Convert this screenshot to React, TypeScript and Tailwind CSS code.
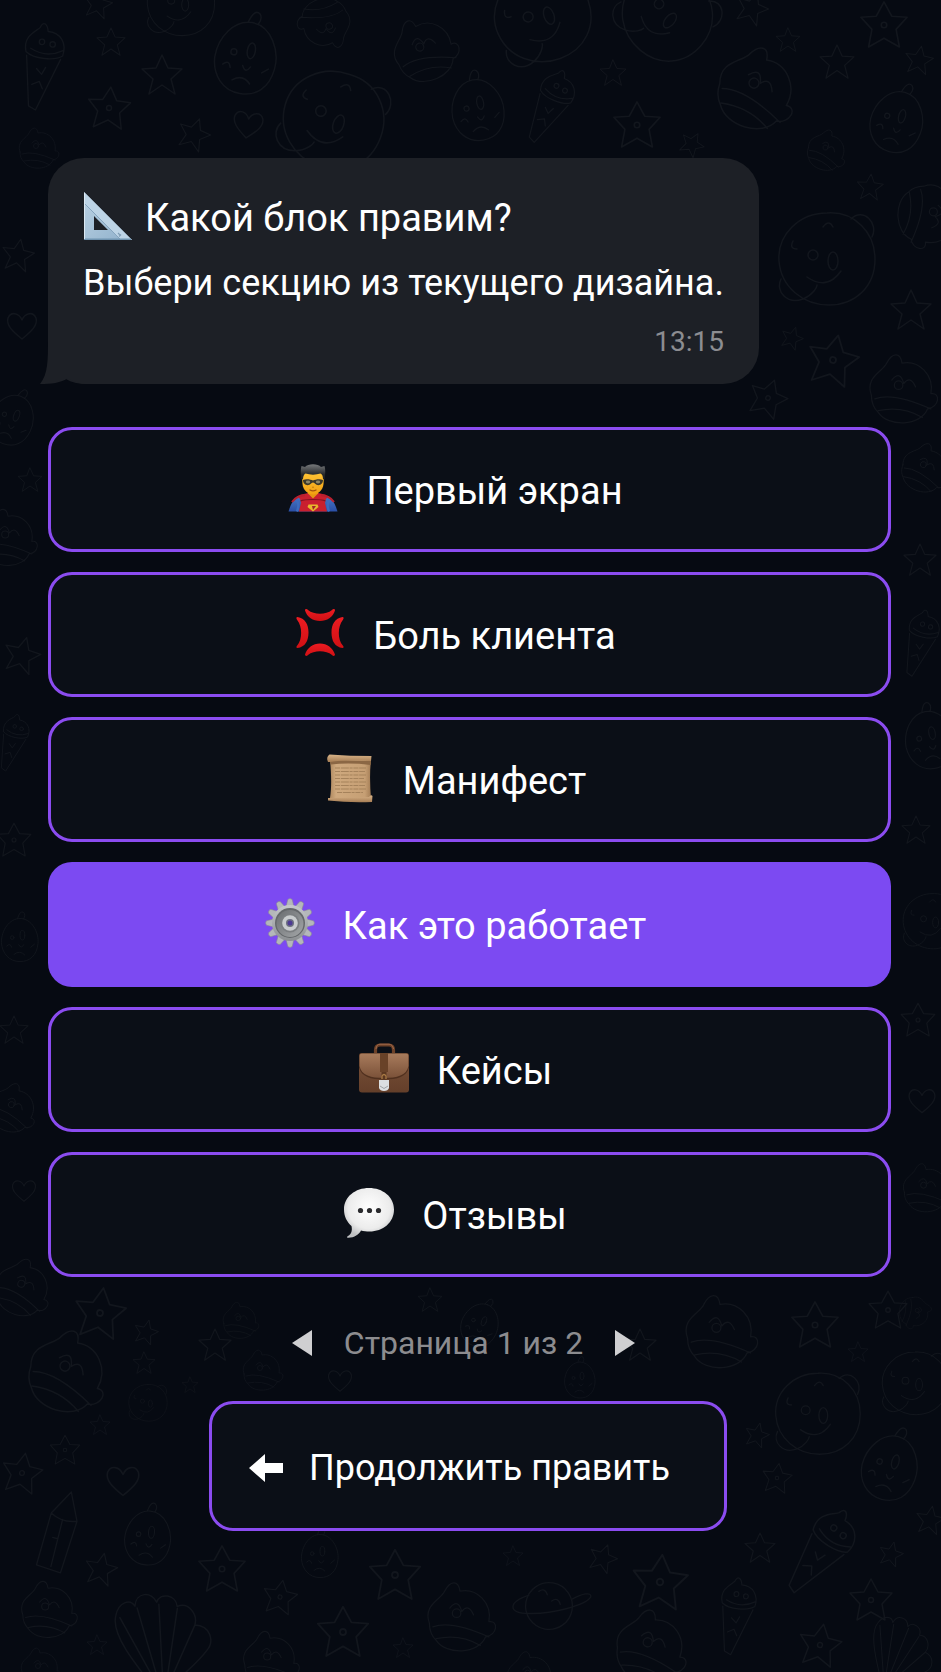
import React from 'react';

type IconProps = { className?: string };

const SetSquareIcon = ({ className }: IconProps) => (
  <svg viewBox="0 0 50 50" className={className} aria-hidden="true">
    <defs>
      <linearGradient id="sq" x1="0" y1="0" x2="1" y2="1">
        <stop offset="0" stopColor="#bcd3e4" />
        <stop offset="1" stopColor="#8fb0cb" />
      </linearGradient>
    </defs>
    <path fillRule="evenodd" d="M1 1 L49 49 H1 Z M11 25 V39 H25 Z" fill="url(#sq)" />
    <path d="M1 1 L49 49 H38 L1 12 Z" fill="#bdd4e6" />
    <path d="M1 12 L38 49" stroke="#86a5bf" strokeWidth="1" />
    <path d="M1 48.300 H48" stroke="#6f93b0" strokeWidth="1.400" />
    <path d="M1.500 2 V48" stroke="#dbe9f3" strokeWidth="1" />
    <path d="M35 42 l2 2 M36 45.500 l2 -2" stroke="#7f9db5" strokeWidth="1.200" />
  </svg>
);

const HeroIcon = ({ className }: IconProps) => (
  <svg viewBox="0 0 50 50" className={className} aria-hidden="true">
    <defs>
      <linearGradient id="cape" x1="0" y1="0" x2="0" y2="1">
        <stop offset="0" stopColor="#4f7fc9" />
        <stop offset="1" stopColor="#2a4fa6" />
      </linearGradient>
      <linearGradient id="hair" x1="0" y1="0" x2="0" y2="1">
        <stop offset="0" stopColor="#77797b" />
        <stop offset=".7" stopColor="#232528" />
      </linearGradient>
      <linearGradient id="skin" x1="0" y1="0" x2="0" y2="1">
        <stop offset="0" stopColor="#ffc83a" />
        <stop offset="1" stopColor="#f2a012" />
      </linearGradient>
    </defs>
    <path d="M0.500 48.500 C3 41 5 35.500 12 33 L20 30.500 H30 L38 33 C45 35.500 47 41 49.500 48.500 Z" fill="url(#cape)" />
    <path d="M10 33 C14 30.500 18 31 20 30 L25 35 L30 30 C33 31 36 30.500 40 33 L37.500 37 L37 40 L39 48.500 H11 L13 40 L12.500 37 Z" fill="#c9202f" />
    <path d="M4 39 C8 33.500 12 33 17 32 M46 39 C42 33.500 38 33 33 32" stroke="#b8202f" strokeWidth="2" fill="none" />
    <path d="M8 37 C11 39 11 43 9 48.500 M42 37 C39 39 39 43 41 48.500" stroke="#3c6cc0" strokeWidth="2.400" fill="none" />
    <path d="M12.500 38 C17 36 33 36 37.500 38" stroke="#7d1320" strokeWidth="1.200" fill="none" />
    <path d="M20.500 41.500 H29.500 L30.500 44 L25 48.500 L19.500 44 Z" fill="#e8b92d" />
    <path d="M24 43 h4 l-3 4 z" fill="#a3202a" />
    <path d="M20 26 H30 V30.500 L25 35.500 L20 30.500 Z" fill="#e8960f" />
    <path d="M14 12 C14 5 36 5 36 12 L35.500 21 C35 27 30 31.500 25 31.500 C20 31.500 15 27 14.500 21 Z" fill="url(#skin)" />
    <path d="M13.500 16.500 C12.500 11 12.500 6 13.500 3 L17 4 C20 .3 30 .3 33 4 L36.500 3 C37.500 6 37.500 11 36.500 16.500 L35 16 C35 13 34 11 32.500 10.500 C28 12 22 12 17.500 10.500 C16 11.500 15.200 13 15 16 Z" fill="url(#hair)" />
    <path d="M15 17 C18 15.500 23 16.500 25 17.500 C27 16.500 32 15.500 35 17 C35 21.500 31 23 28.500 21.700 C27 21 26 19.500 25 19.500 C24 19.500 23 21 21.500 21.700 C19 23 15 21.500 15 17 Z" fill="#3b382c" />
    <ellipse cx="20" cy="19" rx="2.200" ry="1.400" fill="#8d8668" />
    <ellipse cx="30" cy="19" rx="2.200" ry="1.400" fill="#8d8668" />
    <path d="M22 27 Q25 28.700 28 27" stroke="#a1540d" strokeWidth="1.300" fill="none" strokeLinecap="round" />
    <path d="M24 24 Q25 24.800 26 24" stroke="#c57a0a" strokeWidth="1" fill="none" />
  </svg>
);

const AngerIcon = ({ className }: IconProps) => (
  <svg viewBox="0 0 50 50" className={className} aria-hidden="true">
    <defs>
      <linearGradient id="ang" x1="0" y1="0" x2="0" y2="1">
        <stop offset="0" stopColor="#ec1c22" />
        <stop offset="1" stopColor="#d11014" />
      </linearGradient>
    </defs>
    <g fill="url(#ang)">
      <path d="M10 2.500 C10 .7 12 .8 13 2 C19 7 31 7 37 2 C38 .8 40 .7 40 2.500 C38 9 32 13 25 13 C18 13 12 9 10 2.500 Z" />
      <path d="M10 46.500 C10 48.300 12 48.200 13 47 C19 42 31 42 37 47 C38 48.200 40 48.300 40 46.500 C38 40 32 35.500 25 35.500 C18 35.500 12 40 10 46.500 Z" />
      <path d="M2.500 9 C10 10.500 13.500 16 13.500 24.500 C13.500 33 10 39 2.500 40 C1 40 1.200 38.500 2.200 37.500 C7.500 31.500 7.500 18.500 2.200 12 C1.200 10.500 1 9 2.500 9 Z" />
      <path d="M47.500 9 C40 10.500 36.500 16 36.500 24.500 C36.500 33 40 39 47.500 40 C49 40 48.800 38.500 47.800 37.500 C42.500 31.500 42.500 18.500 47.800 12 C48.800 10.500 49 9 47.500 9 Z" />
    </g>
  </svg>
);

const ScrollIcon = ({ className }: IconProps) => (
  <svg viewBox="0 0 50 50" className={className} aria-hidden="true">
    <defs>
      <linearGradient id="pap" x1="0" y1="0" x2="1" y2="0">
        <stop offset="0" stopColor="#b08a61" />
        <stop offset=".15" stopColor="#cfa97e" />
        <stop offset=".85" stopColor="#c69f74" />
        <stop offset="1" stopColor="#a47d55" />
      </linearGradient>
      <linearGradient id="roll" x1="0" y1="0" x2="0" y2="1">
        <stop offset="0" stopColor="#d9b489" />
        <stop offset="1" stopColor="#a67d54" />
      </linearGradient>
    </defs>
    <path d="M5 6 L46 7 C44.500 20 45 33 46 46 L5 45 C7 32 6 18 5 6 Z" fill="url(#pap)" />
    <path d="M5 7 L46 8 L45.500 12 Q25 9.500 5.500 11.500 Z" fill="#8b6744" />
    <path d="M4.500 1.500 Q25 3 46.500 3 L46 8 C30 7 16 7 5.500 9 L3 9 C1.500 6 2 3 4.500 1.500 Z" fill="url(#roll)" />
    <path d="M3 45 Q24 45 44 44 Q46 41 47.500 43 L47 49 Q25 50 3 47.500 Z" fill="url(#roll)" />
    <path
      d="M10 15 H41 M10 18.500 H40 M10 22 H41 M10 25.500 H39 M10 29 H41 M10 32.500 H40 M10 36 H41 M12 39.500 H38"
      stroke="#a5825b"
      strokeWidth="1"
      strokeDasharray="5 .8 8 .8 3 .8"
    />
  </svg>
);

const GEAR_ANGLES = [0, 30, 60, 90, 120, 150, 180, 210, 240, 270, 300, 330];

const GearIcon = ({ className }: IconProps) => (
  <svg viewBox="0 0 50 50" className={className} aria-hidden="true">
    <defs>
      <linearGradient id="gr" x1="0" y1="0" x2="0" y2="1">
        <stop offset="0" stopColor="#c6c9cc" />
        <stop offset="1" stopColor="#8b8e91" />
      </linearGradient>
      <linearGradient id="gi" x1="0" y1="0" x2="1" y2="1">
        <stop offset="0" stopColor="#6a6d70" />
        <stop offset="1" stopColor="#a3a6a8" />
      </linearGradient>
    </defs>
    {GEAR_ANGLES.map((a) => (
      <path key={a} d="M21 9 L22.800 1.500 Q25 -.4 27.200 1.500 L29 9 Z" fill="#b4b7ba" stroke="#85888b" strokeWidth=".5" transform={`rotate(${a} 25 25)`} />
    ))}
    <circle cx="25" cy="25" r="18" fill="url(#gr)" />
    <circle cx="25" cy="25" r="15" fill="#64676a" />
    <circle cx="25" cy="25.500" r="13.500" fill="url(#gi)" />
    <circle cx="25" cy="25" r="9.500" fill="#7b7e81" />
    <circle cx="25" cy="25" r="7.800" fill="#c9ccce" />
    <circle cx="25" cy="25" r="4" fill="#6c6f80" />
    <circle cx="25" cy="25" r="2.500" fill="#4d3a94" />
  </svg>
);

const BriefcaseIcon = ({ className }: IconProps) => (
  <svg viewBox="0 0 50 50" className={className} aria-hidden="true">
    <defs>
      <linearGradient id="bc" x1="0" y1="0" x2="0" y2="1">
        <stop offset="0" stopColor="#7a5139" />
        <stop offset="1" stopColor="#643f2a" />
      </linearGradient>
      <linearGradient id="bf" x1="0" y1="0" x2="0" y2="1">
        <stop offset="0" stopColor="#a87b5c" />
        <stop offset="1" stopColor="#7b5239" />
      </linearGradient>
    </defs>
    <path d="M16.500 10 V7 Q16.500 2 21 2 H30 Q34.500 2 34.500 7 V10" fill="none" stroke="#6d4128" strokeWidth="3.200" />
    <path d="M17 6 Q17.500 1.200 21 1.200 H30 Q33.500 1.200 34.500 6" fill="none" stroke="#a0694a" strokeWidth="1" />
    <rect x="0" y="10" width="50" height="39.500" rx="3" fill="url(#bc)" />
    <path d="M0 13 Q0 10 3 10 H47 Q50 10 50 13 V24 C48 34 38 36.500 25 36.500 C12 36.500 2 34 0 24 Z" fill="#50301e" />
    <path d="M0.500 13 Q0.500 10.500 3 10.500 H47 Q49.500 10.500 49.500 13 V23 C47.500 32.500 38 35 25 35 C12 35 2.500 32.500 .5 23 Z" fill="url(#bf)" />
    <path d="M21 10 H29 V29 H21 Z" fill="#694228" />
    <path d="M25 29 V37" stroke="#5c3821" strokeWidth="5" />
    <path d="M23 36 V33 Q25 30 27 33 V36" fill="none" stroke="#a97a45" strokeWidth="1.300" />
    <path d="M20 37 H30 V45 Q29 48 25 48 Q21 48 20 45 Z" fill="#dcdfe1" />
    <path d="M21 43 L25 45.500 L29 43" stroke="#9fa3a6" strokeWidth="1" fill="none" />
  </svg>
);

const SpeechIcon = ({ className }: IconProps) => (
  <svg viewBox="0 0 50 50" className={className} aria-hidden="true">
    <defs>
      <radialGradient id="sp" cx=".5" cy=".4" r=".6">
        <stop offset="0" stopColor="#ffffff" />
        <stop offset=".7" stopColor="#ececec" />
        <stop offset="1" stopColor="#bfc0c2" />
      </radialGradient>
    </defs>
    <path d="M25 0 C38.500 0 50 8.500 50 21.500 C50 34.500 39 43.500 25.500 43.500 C22.500 43.500 19.500 43.300 17 42.500 C15 46.500 10 50 3.500 49.700 C2.500 49.300 3 48.500 4 48 C7.500 46 8.500 42.500 7.500 38 C3 34 0 28.500 0 21.500 C0 8.500 11.500 0 25 0 Z" fill="url(#sp)" />
    <circle cx="16.500" cy="22.500" r="2.600" fill="#2b2b2e" />
    <circle cx="25.500" cy="22.500" r="2.600" fill="#2b2b2e" />
    <circle cx="34.500" cy="22.500" r="2.600" fill="#2b2b2e" />
  </svg>
);

type Doodle = [shape: string, x: number, y: number, scale: number, angle: number];

const doodles: Doodle[] = [
  ['cone', 46, 62, 0.9, 4], ['star', 111, 42, 0.7, 0], ['star', 98, 4, 0.7, 12], ['star', 162, 75, 1, 0],
  ['face', 109, 108, 1, 5], ['star', 194, 134, 0.8, 20], ['heart', 248, 124, 1, 8], ['bear', 181, 2, 0.7, 0],
  ['egg', 246, 58, 1, 10], ['cup', 325, 22, 0.65, 160], ['cup', 425, 52, 0.8, -20], ['bear', 334, 118, 1.05, 20],
  ['egg', 478, 110, 0.85, -10], ['cone', 555, 104, 0.8, 20], ['star', 613, 73, 0.65, 0], ['face', 637, 125, 1.1, 0],
  ['bear', 542, 14, 1, -20], ['bear', 668, 14, 0.95, 40], ['star', 752, 8, 0.8, 20], ['star', 788, 40, 0.6, 0],
  ['face', 884, 25, 1.1, 0], ['star', 837, 62, 0.85, 0], ['star', 919, 60, 0.7, 10], ['cup', 755, 92, 1, 20],
  ['egg', 897, 122, 0.85, 15], ['cup', 826, 152, 0.5, 20], ['star', 692, 144, 0.6, 30], ['cup', 38, 150, 0.5, 0],
  ['star', 870, 187, 0.65, 5], ['bear', 827, 257, 1, 0], ['cup', 927, 215, 0.8, 90], ['star', 911, 310, 1, 0],
  ['face', 833, 360, 1.2, 12], ['star', 792, 338, 0.55, 20], ['face', 768, 398, 0.9, 20], ['cup', 902, 392, 0.85, 0],
  ['star', 18, 255, 0.8, 10], ['heart', 22, 325, 1, 0], ['egg', 12, 420, 0.7, 20], ['star', 30, 480, 0.6, 0],
  ['cup', 8, 540, 0.7, 0], ['star', 22, 655, 0.9, 15], ['cone', 16, 740, 0.6, 10], ['face', 14, 840, 0.8, 0],
  ['egg', 20, 940, 0.6, 0], ['star', 14, 1030, 0.7, 0], ['cup', 12, 1110, 0.6, 20], ['heart', 24, 1190, 0.8, 0],
  ['cup', 924, 470, 0.6, 20], ['star', 920, 560, 0.8, 0], ['cone', 924, 640, 0.7, 10], ['egg', 930, 740, 0.8, -10],
  ['star', 916, 830, 0.7, 0], ['bear', 932, 920, 0.6, 0], ['face', 918, 1020, 0.8, 0], ['heart', 922, 1100, 0.9, 0],
  ['cup', 926, 1190, 0.6, 0], ['cup', 22, 1290, 0.7, 20], ['face', 100, 1313, 1.2, 8], ['cup', 66, 1375, 1, 20],
  ['star', 146, 1332, 0.6, 15], ['star', 144, 1363, 0.55, 0], ['star', 100, 1425, 0.5, 0], ['face', 65, 1450, 0.7, 0],
  ['face', 22, 1473, 0.95, 10], ['heart', 123, 1480, 1.1, 0], ['pencil', 60, 1530, 0.9, 14], ['bear', 148, 1402, 0.4, 0],
  ['star', 190, 1385, 0.4, 0], ['egg', 148, 1538, 0.75, 5], ['cup', 240, 1322, 0.45, 0], ['star', 215, 1345, 0.8, 0],
  ['cup', 262, 1372, 0.5, 0], ['star', 430, 1300, 0.6, 0], ['egg', 480, 1325, 0.6, 20], ['star', 640, 1345, 0.8, 0],
  ['cup', 720, 1335, 0.9, 0], ['egg', 580, 1380, 0.5, 0], ['heart', 340, 1380, 0.8, 0], ['face', 815, 1325, 1.1, 0],
  ['star', 858, 1352, 0.5, 0], ['face', 888, 1310, 0.9, 0], ['cup', 914, 1312, 0.4, 90], ['bear', 818, 1412, 0.88, 0],
  ['bear', 915, 1382, 0.68, 0], ['egg', 890, 1468, 0.9, 15], ['star', 757, 1435, 0.6, 15], ['face', 777, 1478, 0.7, 8],
  ['cone', 828, 1550, 1, 30], ['star', 760, 1548, 0.75, 0], ['star', 891, 1554, 0.6, 15], ['face', 871, 1600, 1, 0],
  ['star', 930, 1520, 0.7, 10], ['star', 101, 1569, 0.8, 12], ['face', 222, 1569, 1.1, 0], ['egg', 320, 1556, 0.6, 0],
  ['face', 280, 1597, 0.8, 10], ['face', 395, 1575, 1.2, 0], ['star', 513, 1556, 0.5, 0], ['star', 603, 1558, 0.7, 20],
  ['face', 660, 1582, 1.3, 5], ['cone', 740, 1612, 0.8, 4], ['cup', 460, 1620, 0.85, 0], ['planet', 549, 1606, 0.9, 10],
  ['cup', 650, 1650, 0.9, 10], ['face', 820, 1645, 1, 10], ['shell', 162, 1640, 1, -5], ['cup', 48, 1612, 0.7, 0],
  ['face', 343, 1632, 1.2, 0], ['cup', 270, 1662, 0.7, 0], ['star', 403, 1648, 0.5, 0], ['star', 97, 1645, 0.5, 0],
  ['shell', 900, 1652, 0.7, 20], ['cup', 40, 1670, 0.5, 0], ['cup', 530, 1678, 0.6, 0],
];

const Doodles = () => (
  <svg
    className="pointer-events-none absolute inset-0 h-full w-full"
    viewBox="0 0 941 1672"
    preserveAspectRatio="xMidYMid slice"
    aria-hidden="true"
  >
    <defs>
      <path id="star" d="M0 -20 L6 -7 L20 -6 L9 4 L13 19 L0 10 L-13 19 L-9 4 L-20 -6 L-6 -7 Z" />
      <g id="face">
        <path d="M0 -21 L7 -8 L21 -7 L11 4 L14 20 L0 12 L-14 20 L-11 4 L-21 -7 L-7 -8 Z" />
        <circle r="2.500" />
      </g>
      <path id="heart" d="M0 14 C-10 6 -16 0 -14 -7 C-11 -14 -3 -12 0 -5 C3 -12 11 -14 14 -7 C16 0 10 6 0 14 Z" />
      <g id="cone">
        <path d="M-23 -10 C-28 -28 -12 -34 -9 -38 C-6 -46 -1 -42 0 -34 C14 -34 22 -22 18 -8 C10 -2 -14 -2 -23 -10 Z M-22 -6 L-16 50 L-8 54 L16 -4 M-18 -14 Q0 -4 18 -14 M-10 8 l6 6 l4 -8 M-14 26 l8 -4 l4 8" />
        <circle cx="-6" cy="-22" r="3" />
        <circle cx="6" cy="-20" r="3" />
      </g>
      <g id="egg">
        <path d="M0 -36 C20 -36 32 -12 30 6 C28 26 16 36 0 36 C-18 36 -30 22 -31 4 C-31 -16 -18 -36 0 -36 Z M-4 -36 Q0 -50 6 -46 Q10 -42 6 -35 M-10 24 Q0 16 8 25 M-22 10 q6 -6 8 2" />
        <ellipse cx="4" cy="-8" rx="4" ry="8" />
        <circle cx="-13" cy="-4" r="3" />
        <path d="M-2 8 q4 8 8 0 M18 12 l6 -5" />
      </g>
      <g id="bear">
        <path d="M0 -44 C28 -46 48 -24 48 2 C48 30 28 48 2 48 C-24 48 -46 30 -48 4 C-50 -22 -28 -44 0 -44 Z M24 -38 C36 -50 52 -34 45 -20 M-46 22 C-52 34 -40 48 -24 42 C-14 38 -10 30 -10 28" />
        <circle cx="-14" cy="-2" r="5" />
        <ellipse cx="6" cy="4" rx="5" ry="9" />
        <path d="M-20 20 Q0 34 14 14 M-4 -30 q6 -8 10 0 M-34 -16 q-4 8 4 8" />
      </g>
      <g id="cup">
        <path d="M-36 4 C-44 -18 -22 -24 -18 -34 C-12 -46 -2 -48 0 -34 C20 -38 38 -20 34 2 C46 0 44 18 30 20 C22 40 -16 42 -28 24 C-34 18 -36 12 -36 4 Z M-32 8 Q-10 0 34 20 M-28 22 Q0 16 24 30 M-12 -14 q10 -12 14 4 q8 -10 14 4" />
        <circle cx="-4" cy="-8" r="5" />
      </g>
      <path id="shell" d="M-10 50 C-30 20 -50 -10 -44 -28 C-40 -42 -28 -44 -24 -36 C-22 -50 -6 -50 -2 -38 C2 -48 18 -44 18 -32 C30 -36 38 -22 34 -12 C50 -10 52 6 44 14 C30 30 10 40 4 50 M-8 46 L-40 -26 M-6 46 L-22 -34 M-3 46 L0 -36 M0 46 L18 -30 M2 46 L34 -12" />
      <g id="planet">
        <circle r="26" />
        <path d="M-24 -8 C-46 4 -44 16 -20 12 C6 8 40 -8 44 -18 C44 -24 34 -20 24 -12 M-14 -14 q6 -6 10 2 M2 -6 q6 -6 10 2" />
      </g>
      <path id="pencil" d="M-16 44 L-14 -16 L2 -44 L16 -14 L12 46 Z M-14 -16 Q0 -8 16 -14 M0 -12 V42 M-6 10 h6" />
    </defs>
    <g fill="none" stroke="#12161d" strokeWidth="1.500" strokeLinejoin="round" strokeLinecap="round">
      {doodles.map(([shape, x, y, scale, angle], i) => (
        <use key={i} href={`#${shape}`} transform={`translate(${x} ${y}) rotate(${angle}) scale(${scale})`} />
      ))}
    </g>
  </svg>
);

type Section = { label: string; Icon: (p: IconProps) => React.JSX.Element; selected?: boolean };

const sections: Section[] = [
  { label: 'Первый экран', Icon: HeroIcon },
  { label: 'Боль клиента', Icon: AngerIcon },
  { label: 'Манифест', Icon: ScrollIcon },
  { label: 'Как это работает', Icon: GearIcon, selected: true },
  { label: 'Кейсы', Icon: BriefcaseIcon },
  { label: 'Отзывы', Icon: SpeechIcon },
];

export default function App() {
  return (
    <main className="relative min-h-screen overflow-hidden bg-[#060a12] pt-[158px] pr-[50px] pb-[141px] pl-12 font-['Roboto',sans-serif] text-white">
      <Doodles />
      <div className="relative flex flex-col">
        <section className="relative w-fit rounded-[36px] bg-[#1d2026] px-[35px] pt-7 pb-4">
          <svg viewBox="0 0 46 44" className="absolute bottom-0 -left-2 h-11 w-[46px]" aria-hidden="true">
            <path d="M8 0 C8 20 8 34 0 44 C11 44 21 43 28 38 C34 42 40 44 46 44 V0 Z" fill="#1d2026" />
          </svg>
          <div className="relative">
            <p className="flex items-center gap-3 text-[38px] leading-[65px]">
              <SetSquareIcon className="mb-1.5 size-[50px]" />
              Какой блок правим?
            </p>
            <p className="text-[36px] leading-[65px]">Выбери секцию из текущего дизайна.</p>
            <time className="block text-right text-[28px] leading-[52px] text-[#8c8d91]">13:15</time>
          </div>
        </section>

        <div className="mt-[43px] flex flex-col gap-5">
          {sections.map(({ label, Icon, selected }) => (
            <button
              key={label}
              type="button"
              aria-pressed={!!selected}
              className={
                selected
                  ? 'flex h-[125px] items-center justify-center gap-7 rounded-3xl bg-[#7c4af2] pt-1 pr-7 text-[38px]'
                  : 'flex h-[125px] items-center justify-center gap-7 rounded-3xl border-[3px] border-[#8b4cf0] bg-[#0b0f17] pt-1 pr-7 text-[38px]'
              }
            >
              <Icon className="mb-2 size-[50px]" />
              {label}
            </button>
          ))}
        </div>

        <nav aria-label="Страницы" className="mt-10 flex items-center justify-center gap-8 pr-3 text-[32px] leading-[52px] text-[#8c8c8f]">
          <button type="button" aria-label="Предыдущая страница">
            <svg viewBox="0 0 20 26" className="h-[26px] w-5" aria-hidden="true">
              <path d="M20 0 V26 L0 13 Z" fill="#cfcfd1" />
            </svg>
          </button>
          <span>Страница 1 из 2</span>
          <button type="button" aria-label="Следующая страница">
            <svg viewBox="0 0 20 26" className="h-[26px] w-5" aria-hidden="true">
              <path d="M0 0 V26 L20 13 Z" fill="#cfcfd1" />
            </svg>
          </button>
        </nav>

        <div className="mt-8 flex justify-center pr-1">
          <button
            type="button"
            className="flex h-[130px] w-[518px] max-w-full items-center justify-center gap-[26px] rounded-3xl border-[3px] border-[#8b4cf0] bg-[#0b0f17] pt-1 pr-4 text-[36px]"
          >
            <svg viewBox="0 0 34 28" className="h-7 w-[34px]" aria-hidden="true">
              <path d="M0 14 L16 0 V9 H34 V19 H16 V28 Z" fill="#fff" />
            </svg>
            Продолжить править
          </button>
        </div>
      </div>
    </main>
  );
}
